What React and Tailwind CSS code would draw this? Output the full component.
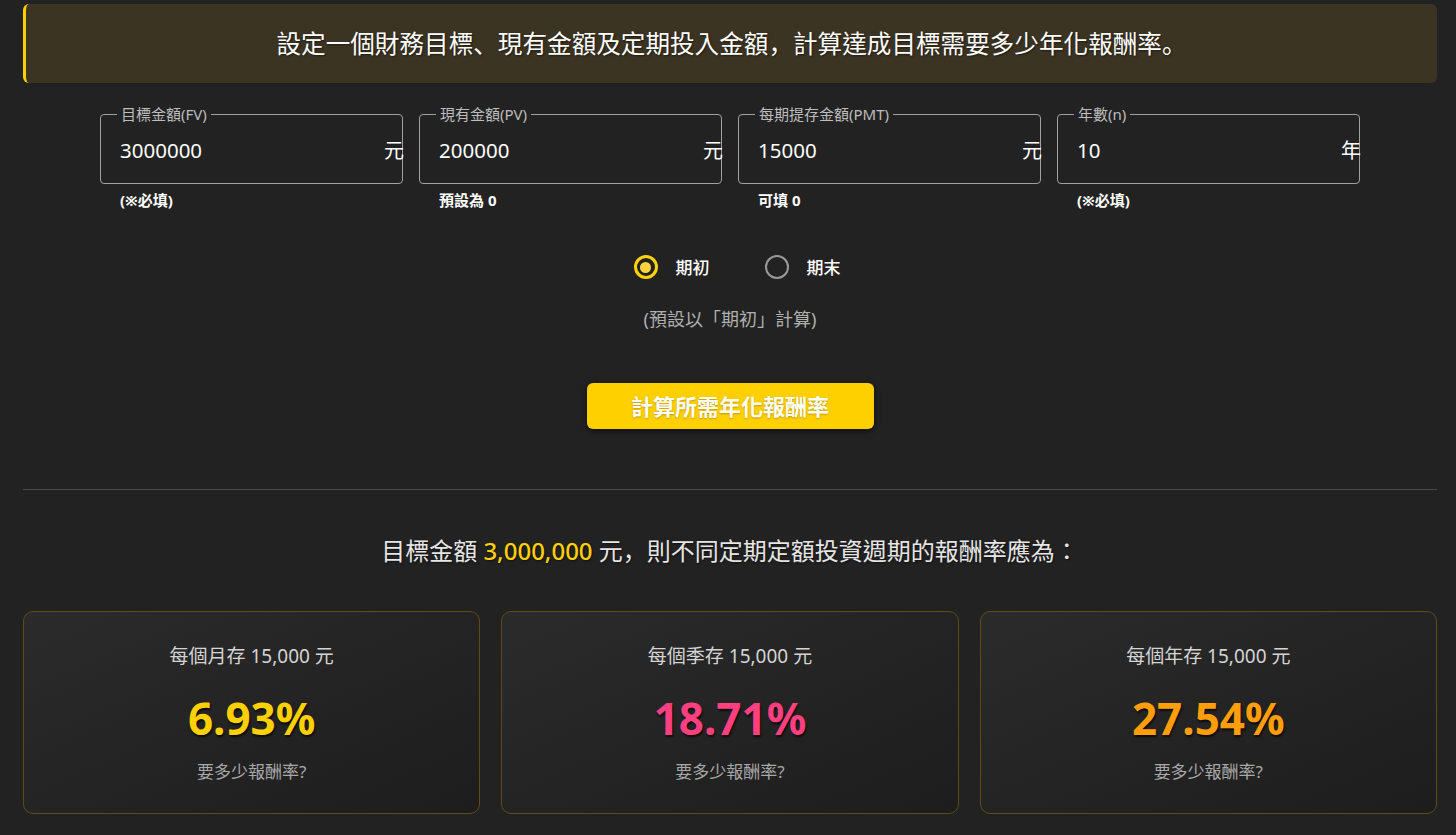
import React, { useState } from 'react'

const fields = [
  { label: '目標金額(FV)', value: '3000000', unit: '元', note: '(※必填)' },
  { label: '現有金額(PV)', value: '200000', unit: '元', note: '預設為 0' },
  { label: '每期提存金額(PMT)', value: '15000', unit: '元', note: '可填 0' },
  { label: '年數(n)', value: '10', unit: '年', note: '(※必填)' },
]

const results = [
  { title: '每個月存 15,000 元', rate: '6.93%', color: 'text-[#ffd000]' },
  { title: '每個季存 15,000 元', rate: '18.71%', color: 'text-[#ff3f80]' },
  { title: '每個年存 15,000 元', rate: '27.54%', color: 'text-[#ff9d0a]' },
]

// punctuation sits bottom-left in the design, like the JP cut
const P = ({ children }) => (
  <span className="font-['Noto_Sans_CJK_JP',sans-serif]">{children}</span>
)

const Radio = ({ checked, label, onClick }) => (
  <button type="button" onClick={onClick} className="flex items-center gap-[18px]">
    {checked ? (
      <span className="w-[24px] h-[24px] rounded-full border-[3px] border-[#ffd20a] flex items-center justify-center">
        <span className="w-[11px] h-[11px] rounded-full bg-[#ffd440]"></span>
      </span>
    ) : (
      <span className="w-[24px] h-[24px] rounded-full border-2 border-[#9a9a9a]"></span>
    )}
    <span className="text-[17px] text-white font-medium">{label}</span>
  </button>
)

const App = () => {
  const [period, setPeriod] = useState('begin')

  return (
    <div className="min-h-[835px] bg-[#222222] font-['Noto_Sans','Noto_Sans_CJK_TC',sans-serif] pl-[23px] pr-[19px] pt-[4px] pb-[22px]">
      <div className="h-[79px] bg-[#3c3423] border-l-[3px] border-[#ffd000] rounded-md flex items-center justify-center">
        <p className="text-[24.6px] text-white [text-shadow:1px_1px_2px_rgba(0,0,0,0.5)]">
          設定一個財務目標<P>、</P>現有金額及定期投入金額<P>，</P>計算達成目標需要多少年化報酬率<P>。</P>
        </p>
      </div>

      <div className="w-[1260px] mx-auto mt-[31px] grid grid-cols-4 gap-[16px]">
        {fields.map((f, i) => (
          <div key={i}>
            <div className="relative h-[70px] border border-[#a0a0a0] rounded-[4px] flex items-center pl-[19px]">
              <span className="absolute -top-[11px] left-[16px] px-[4px] bg-[#222222] text-[15px] leading-[20px] text-[#bdbdbd]">
                {f.label}
              </span>
              <span className="flex-1 text-[20.5px] text-white pt-[3px]">{f.value}</span>
              <span className="text-[20px] text-white pt-[3px] -mr-[2px]">{f.unit}</span>
            </div>
            <p className="mt-[5px] pl-[20px] text-[15px] font-bold text-white">{f.note}</p>
          </div>
        ))}
      </div>

      <div className="flex justify-center gap-[55px] mt-[43px] pl-[14px]">
        <Radio checked={period === 'begin'} label="期初" onClick={() => setPeriod('begin')} />
        <Radio checked={period === 'end'} label="期末" onClick={() => setPeriod('end')} />
      </div>

      <p className="text-center text-[18px] text-[#b0b0b0] mt-[26px]">(預設以「期初」計算)</p>

      <div className="flex justify-center mt-[50px]">
        <button
          type="button"
          className="w-[287px] h-[46px] bg-[#ffd000] rounded-md text-white font-bold text-[22px] shadow-[0_2px_6px_rgba(0,0,0,0.6)] [text-shadow:0_1px_2px_rgba(0,0,0,0.25)]"
        >
          計算所需年化報酬率
        </button>
      </div>

      <div className="border-t border-[#4a4a4a] mt-[60px]"></div>

      <p className="text-center text-[24px] text-[#e6e6e6] mt-[42px] [text-shadow:1px_1px_2px_rgba(0,0,0,0.5)]">
        目標金額 <span className="text-[#ffd000] font-medium">3,000,000</span> 元<P>，</P>則不同定期定額投資週期的報酬率應為<P>：</P>
      </p>

      <div className="grid grid-cols-3 gap-[21px] mt-[42px]">
        {results.map((r, i) => (
          <div
            key={i}
            className="h-[203px] rounded-[10px] border border-[#5c4c17] bg-gradient-to-br from-[#2b2b2b] to-[#1d1d1d] flex flex-col items-center pt-[30px]"
          >
            <p className="text-[19px] text-[#d4d4d4]">{r.title}</p>
            <p className={`text-[44px] font-bold leading-none mt-[25px] ${r.color} [text-shadow:1px_2px_2px_rgba(0,0,0,0.7)]`}>
              {r.rate}
            </p>
            <p className="text-[17px] text-[#a8a8a8] mt-[19px]">要多少報酬率?</p>
          </div>
        ))}
      </div>
    </div>
  )
}

export default App
